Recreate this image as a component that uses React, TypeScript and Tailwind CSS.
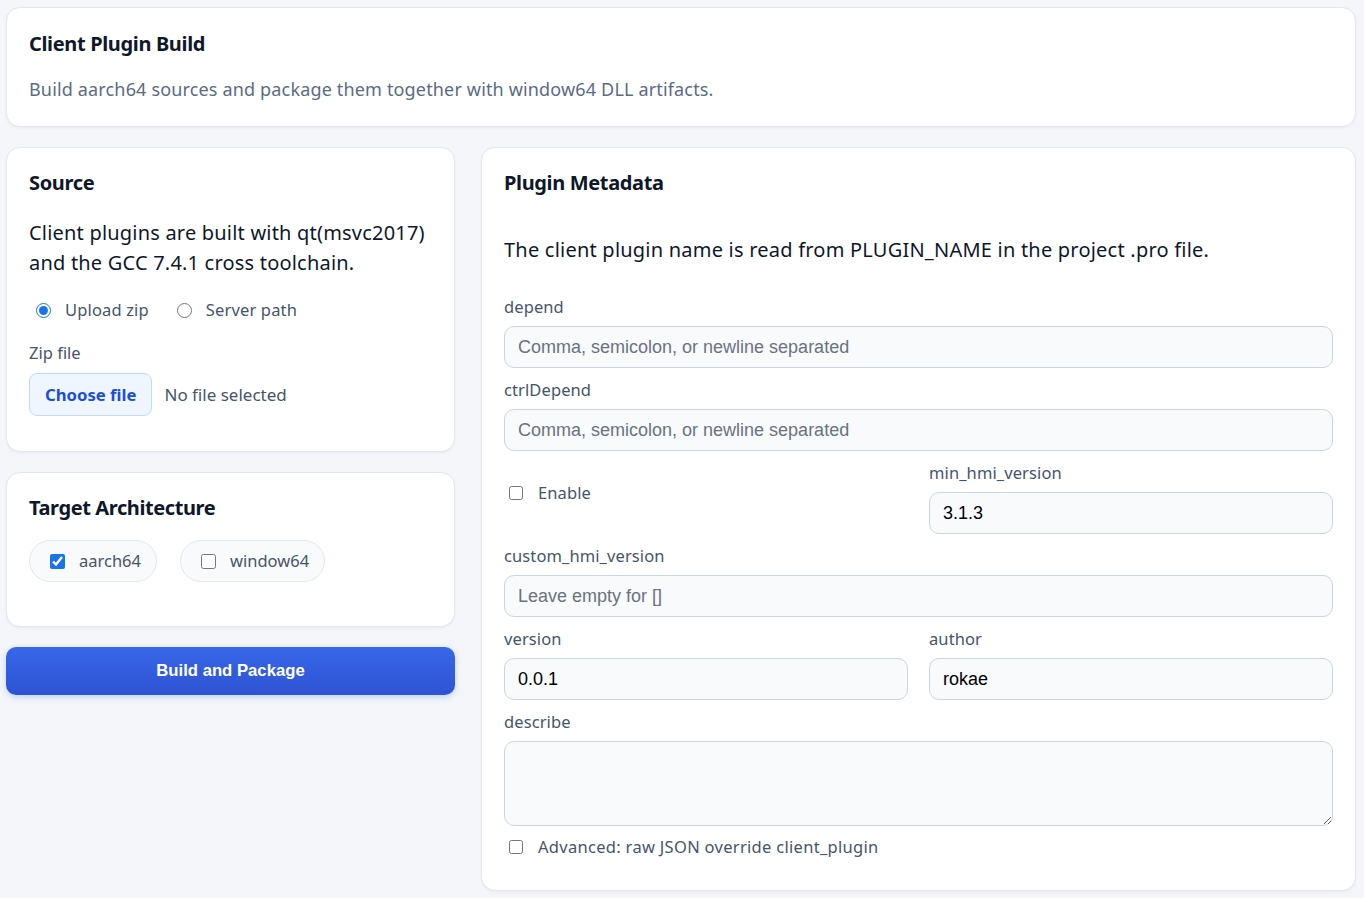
import { useState } from "react";

const labelCls = "block text-[16.5px] leading-[22px] tracking-[0.1px] text-[#475569] mb-[8px]";
const inputCls =
  "block w-full h-[42px] rounded-[10px] border border-[#cbd5e1] bg-[#f8fafc] px-[13px] text-[18px] text-black placeholder:text-[#6b7280] outline-none font-['Liberation_Sans',Arial,sans-serif]";

function Field({
  label,
  value,
  placeholder,
}: {
  label: string;
  value?: string;
  placeholder?: string;
}) {
  const [v, setV] = useState(value ?? "");
  return (
    <div>
      <label className={labelCls}>{label}</label>
      <input
        className={inputCls}
        value={v}
        placeholder={placeholder}
        onChange={(e) => setV(e.target.value)}
      />
    </div>
  );
}

export default function App() {
  const [mode, setMode] = useState<"zip" | "path">("zip");
  const [arch, setArch] = useState({ aarch64: true, window64: false });
  const [enable, setEnable] = useState(false);
  const [advanced, setAdvanced] = useState(false);

  return (
    <div className="min-h-screen bg-[#f4f6fa] pl-[6px] pr-[8px] pt-[7px] pb-[8px] font-['Noto_Sans',sans-serif]">
      <div className="rounded-[14px] border border-[#e3e8ef] bg-white px-[22px] pt-[22px] pb-[24px] shadow-[0_1px_3px_rgba(15,23,42,0.05)]">
        <h1 className="text-[20px] leading-[28px] font-bold tracking-[-0.35px] text-[#0f172a]">Client Plugin Build</h1>
        <p className="mt-[18px] text-[18px] leading-[26px] tracking-[0.16px] text-[#5b6b84]">
          Build aarch64 sources and package them together with window64 DLL artifacts.
        </p>
      </div>

      <div className="mt-[20px] grid grid-cols-[449px_1fr] gap-[26px] items-start">
        <div className="flex flex-col">
          <section className="rounded-[14px] border border-[#e3e8ef] bg-white px-[22px] pt-[21px] pb-[35px] shadow-[0_1px_3px_rgba(15,23,42,0.05)]">
            <h2 className="text-[20px] leading-[28px] font-bold tracking-[-0.35px] text-[#0f172a]">Source</h2>
            <p className="mt-[21px] text-[20px] leading-[30px] tracking-[0.2px] text-[#0f172a]">
              Client plugins are built with qt(msvc2017) and the GCC 7.4.1 cross toolchain.
            </p>
            <div className="mt-[20px] flex items-center text-[16.5px] leading-[24px] tracking-[0.15px] text-[#475569]">
              <label className="flex items-center gap-[14px]">
                <input
                  type="radio"
                  name="mode"
                  checked={mode === "zip"}
                  onChange={() => setMode("zip")}
                  className="ml-[7px] m-0 h-[15px] w-[15px] accent-[#1a73e8]"
                />
                Upload zip
              </label>
              <label className="ml-[28px] flex items-center gap-[14px]">
                <input
                  type="radio"
                  name="mode"
                  checked={mode === "path"}
                  onChange={() => setMode("path")}
                  className="m-0 h-[15px] w-[15px] accent-[#1a73e8]"
                />
                Server path
              </label>
            </div>
            <label className="mt-[20px] block text-[16.5px] leading-[22px] text-[#475569]">Zip file</label>
            <div className="mt-[9px] flex items-center gap-[12px]">
              <button className="h-[43px] rounded-[8px] border border-[#bfdbfe] bg-[#eff6ff] px-[15px] text-[16.7px] font-bold text-[#1d4ed8]">
                Choose file
              </button>
              <span className="text-[17px] text-[#475569]">No file selected</span>
            </div>
          </section>

          <section className="mt-[20px] rounded-[14px] border border-[#e3e8ef] bg-white px-[22px] pt-[21px] pb-[44px] shadow-[0_1px_3px_rgba(15,23,42,0.05)]">
            <h2 className="text-[20px] leading-[28px] font-bold tracking-[-0.4px] text-[#0f172a]">Target Architecture</h2>
            <div className="mt-[18px] flex gap-[23px] text-[16.5px] text-[#475569]">
              {(["aarch64", "window64"] as const).map((a) => (
                <label
                  key={a}
                  className="flex h-[42px] items-center gap-[14px] rounded-full border border-[#e2e8f0] bg-[#f8fafc] pl-[20px] pr-[15px]"
                >
                  <input
                    type="checkbox"
                    checked={arch[a]}
                    onChange={() => setArch({ ...arch, [a]: !arch[a] })}
                    className="m-0 h-[15px] w-[15px] accent-[#1a73e8]"
                  />
                  {a}
                </label>
              ))}
            </div>
          </section>

          <button className="mt-[20px] h-[48px] w-full rounded-[10px] bg-gradient-to-b from-[#3767e8] to-[#2f52d4] text-[16.7px] font-bold text-white font-['Liberation_Sans',Arial,sans-serif] shadow-[0_2px_6px_rgba(37,99,235,0.25)]">
            Build and Package
          </button>
        </div>

        <section className="rounded-[14px] border border-[#e3e8ef] bg-white px-[22px] pt-[21px] pb-[31px] shadow-[0_1px_3px_rgba(15,23,42,0.05)]">
          <h2 className="text-[20px] leading-[28px] font-bold tracking-[-0.35px] text-[#0f172a]">Plugin Metadata</h2>
          <p className="mt-[38px] text-[20px] leading-[30px] tracking-[0.22px] text-[#0f172a]">
            The client plugin name is read from PLUGIN_NAME in the project .pro file.
          </p>

          <div className="mt-[31px] flex flex-col gap-[11px]">
            <Field label="depend" placeholder="Comma, semicolon, or newline separated" />
            <Field label="ctrlDepend" placeholder="Comma, semicolon, or newline separated" />
            <div className="grid grid-cols-2 gap-[21px]">
              <label className="flex items-start gap-[15px] pt-[20px] text-[16.5px] leading-[22px] tracking-[0.1px] text-[#475569]">
                <input
                  type="checkbox"
                  checked={enable}
                  onChange={() => setEnable(!enable)}
                  className="ml-[5px] mt-[4px] h-[14px] w-[14px] accent-[#1a73e8]"
                />
                Enable
              </label>
              <Field label="min_hmi_version" value="3.1.3" />
            </div>
            <Field label="custom_hmi_version" placeholder="Leave empty for []" />
            <div className="grid grid-cols-2 gap-[21px]">
              <Field label="version" value="0.0.1" />
              <Field label="author" value="rokae" />
            </div>
            <div>
              <label className={labelCls}>describe</label>
              <textarea className="block h-[85px] w-full rounded-[10px] border border-[#cbd5e1] bg-[#f8fafc] px-[13px] py-[8px] text-[18px] outline-none" />
            </div>
          </div>

          <label className="mt-[9px] flex items-center gap-[15px] text-[16.5px] leading-[24px] tracking-[0.3px] text-[#475569]">
            <input
              type="checkbox"
              checked={advanced}
              onChange={() => setAdvanced(!advanced)}
              className="ml-[5px] m-0 h-[14px] w-[14px] accent-[#1a73e8]"
            />
            Advanced: raw JSON override client_plugin
          </label>
        </section>
      </div>
    </div>
  );
}
